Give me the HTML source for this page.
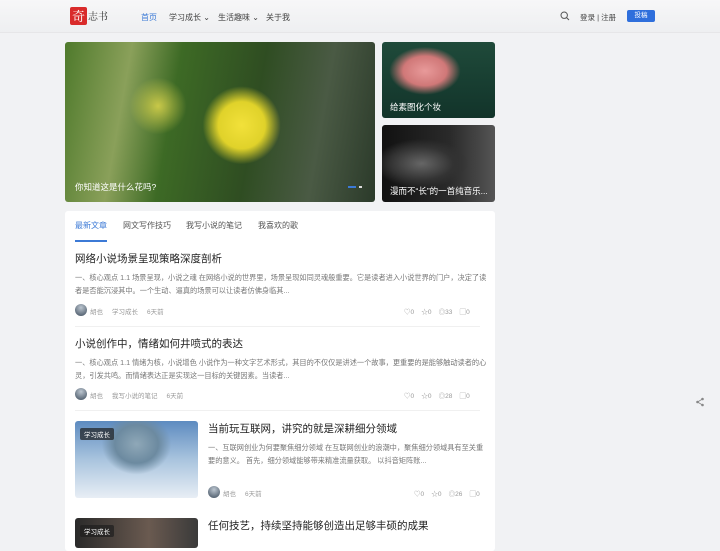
<!DOCTYPE html><html><head><meta charset="utf-8"><style>
*{margin:0;padding:0;box-sizing:border-box}
body{width:720px;height:540px;overflow:hidden;background:#f1f2f4;font-family:"Liberation Sans","Noto Sans CJK SC",sans-serif;position:relative;color:#333}
.hd{position:absolute;left:0;top:0;width:720px;height:33px;background:linear-gradient(#f7f7f8,#eeeff1);border-bottom:1px solid #e6e6e8}
.a{position:absolute;white-space:nowrap}
.nav{font-size:8px;color:#444;top:12px}
.img{position:absolute;border-radius:3px;overflow:hidden}
.cap{position:absolute;color:#fff;font-size:8.5px;white-space:nowrap}
.card{position:absolute;left:65px;top:211px;width:430px;height:340px;background:#fff;border-radius:3px}
.t{position:absolute;font-size:10.5px;color:#222;white-space:nowrap}
.ex{position:absolute;font-size:7.2px;color:#777;line-height:13px}
.m{position:absolute;font-size:6.5px;color:#999;white-space:nowrap}
.av{position:absolute;width:12px;height:12px;border-radius:50%;background:radial-gradient(circle at 50% 30%,#bcc6d0,#3d4c5c)}
.tag{position:absolute;background:rgba(30,30,30,.7);color:#fff;font-size:6.5px;padding:1px 4px;border-radius:2px}
</style></head><body>
<div class="hd"></div>
<div class="a" style="left:70px;top:7px;width:17px;height:18px;background:#d92b2b;border-radius:2px;color:#fff;font-size:13px;line-height:18px;text-align:center;font-family:'Noto Serif CJK SC',serif">奇</div>
<div class="a" style="left:88px;top:8px;font-size:10px;color:#333;font-family:'Noto Serif CJK SC',serif">志书</div>
<div class="a nav" style="left:141px;color:#3c7ad6">首页</div>
<div class="a nav" style="left:169px">学习成长 ⌄</div>
<div class="a nav" style="left:218px">生活趣味 ⌄</div>
<div class="a nav" style="left:266px">关于我</div>
<svg class="a" style="left:560px;top:11px" width="10" height="10" viewBox="0 0 10 10"><circle cx="4.2" cy="4.2" r="3.2" fill="none" stroke="#555" stroke-width="1"/><path d="M6.6 6.6L9 9" stroke="#555" stroke-width="1"/></svg>
<div class="a nav" style="left:580px;font-size:7.5px">登录 | 注册</div>
<div class="a" style="left:627px;top:10px;width:28px;height:12px;background:#2f6fdc;border-radius:2px;color:#fff;font-size:6.5px;text-align:center;line-height:12px">投稿</div>

<div class="img" style="left:65px;top:42px;width:310px;height:160px;background:radial-gradient(circle at 57% 52%,#f2e13a 0,#e0d22a 12%,transparent 20%),radial-gradient(circle at 30% 40%,#c8c848 0,transparent 12%),linear-gradient(100deg,#4f7a2c 0%,#8aa05a 20%,#3d6a25 35%,#2f4d22 60%,#4a5a44 80%,#2b3a2a 100%)"></div>
<div class="cap" style="left:75px;top:181px">你知道这是什么花吗?</div>
<div class="a" style="left:348px;top:186px;width:8px;height:2px;background:#3c7ad6"></div>
<div class="a" style="left:359px;top:186px;width:3px;height:2px;background:#ddd"></div>
<div class="img" style="left:382px;top:42px;width:113px;height:76px;background:radial-gradient(ellipse at 38% 38%,#e89a9a 0,#d07878 22%,transparent 36%),linear-gradient(#1f4a3a,#12342a)"></div>
<div class="cap" style="left:390px;top:101px">给素图化个妆</div>
<div class="img" style="left:382px;top:125px;width:113px;height:77px;background:radial-gradient(ellipse at 35% 50%,#666 0,#333 30%,transparent 45%),linear-gradient(90deg,#111,#2a2a2a 60%,#555)"></div>
<div class="cap" style="left:390px;top:185px">漫而不“长”的一首纯音乐...</div>

<div class="card"></div>
<div class="a" style="left:75px;top:220px;font-size:8px;color:#3c7ad6">最新文章</div>
<div class="a" style="left:75px;top:240px;width:32px;height:2px;background:#3c7ad6"></div>
<div class="a" style="left:123px;top:220px;font-size:8px;color:#555">网文写作技巧</div>
<div class="a" style="left:186px;top:220px;font-size:8px;color:#555">我写小说的笔记</div>
<div class="a" style="left:258px;top:220px;font-size:8px;color:#555">我喜欢的歌</div>

<div class="t" style="left:75px;top:251px">网络小说场景呈现策略深度剖析</div>
<div class="ex" style="left:75px;top:271px;width:412px">一、核心观点 1.1 场景呈现，小说之魂 在网络小说的世界里，场景呈现如同灵魂般重要。它是读者进入小说世界的门户，决定了读者是否能沉浸其中。一个生动、逼真的场景可以让读者仿佛身临其...</div>
<div class="av" style="left:75px;top:304px"></div>
<div class="m" style="left:90px;top:306px">胡也&nbsp;&nbsp;&nbsp;&nbsp;&nbsp;学习成长&nbsp;&nbsp;&nbsp;&nbsp;&nbsp;6天前</div>
<div class="m" style="left:404px;top:306px">♡0&nbsp;&nbsp;&nbsp;&nbsp;☆0&nbsp;&nbsp;&nbsp;&nbsp;◎33&nbsp;&nbsp;&nbsp;&nbsp;▢0</div>
<div class="a" style="left:75px;top:326px;width:405px;height:1px;background:#f0f0f0"></div>

<div class="t" style="left:75px;top:336px">小说创作中，情绪如何井喷式的表达</div>
<div class="ex" style="left:75px;top:356px;width:412px">一、核心观点 1.1 情绪为核，小说增色 小说作为一种文字艺术形式，其目的不仅仅是讲述一个故事，更重要的是能够触动读者的心灵，引发共鸣。而情绪表达正是实现这一目标的关键因素。当读者...</div>
<div class="av" style="left:75px;top:388px"></div>
<div class="m" style="left:90px;top:390px">胡也&nbsp;&nbsp;&nbsp;&nbsp;&nbsp;我写小说的笔记&nbsp;&nbsp;&nbsp;&nbsp;&nbsp;6天前</div>
<div class="m" style="left:404px;top:390px">♡0&nbsp;&nbsp;&nbsp;&nbsp;☆0&nbsp;&nbsp;&nbsp;&nbsp;◎28&nbsp;&nbsp;&nbsp;&nbsp;▢0</div>
<div class="a" style="left:75px;top:410px;width:405px;height:1px;background:#f0f0f0"></div>

<div class="img" style="left:75px;top:421px;width:123px;height:77px;background:radial-gradient(ellipse at 50% 30%,#8fa8b8 0,#6c8aa0 25%,transparent 40%),linear-gradient(#5d8bc0,#a9c4de 50%,#e8eef5)"></div>
<div class="tag" style="left:80px;top:428px">学习成长</div>
<div class="t" style="left:208px;top:421px">当前玩互联网，讲究的就是深耕细分领域</div>
<div class="ex" style="left:208px;top:441px;width:280px">一、互联网创业为何要聚焦细分领域 在互联网创业的浪潮中，聚焦细分领域具有至关重要的意义。 首先，细分领域能够带来精准流量获取。 以抖音矩阵账...</div>
<div class="av" style="left:208px;top:486px"></div>
<div class="m" style="left:223px;top:488px">胡也&nbsp;&nbsp;&nbsp;&nbsp;&nbsp;6天前</div>
<div class="m" style="left:414px;top:488px">♡0&nbsp;&nbsp;&nbsp;&nbsp;☆0&nbsp;&nbsp;&nbsp;&nbsp;◎26&nbsp;&nbsp;&nbsp;&nbsp;▢0</div>

<div class="img" style="left:75px;top:518px;width:123px;height:30px;background:linear-gradient(90deg,#2a2a2a,#6a5a50 60%,#3a3a3a)"></div>
<div class="tag" style="left:80px;top:525px">学习成长</div>
<div class="t" style="left:208px;top:518px">任何技艺，持续坚持能够创造出足够丰硕的成果</div>

<svg class="a" style="left:695px;top:397px" width="10" height="10" viewBox="0 0 10 10"><circle cx="7.5" cy="2" r="1.3" fill="#888"/><circle cx="2.5" cy="5" r="1.3" fill="#888"/><circle cx="7.5" cy="8" r="1.3" fill="#888"/><path d="M7.5 2L2.5 5L7.5 8" stroke="#888" stroke-width=".8" fill="none"/></svg>
</body></html>
